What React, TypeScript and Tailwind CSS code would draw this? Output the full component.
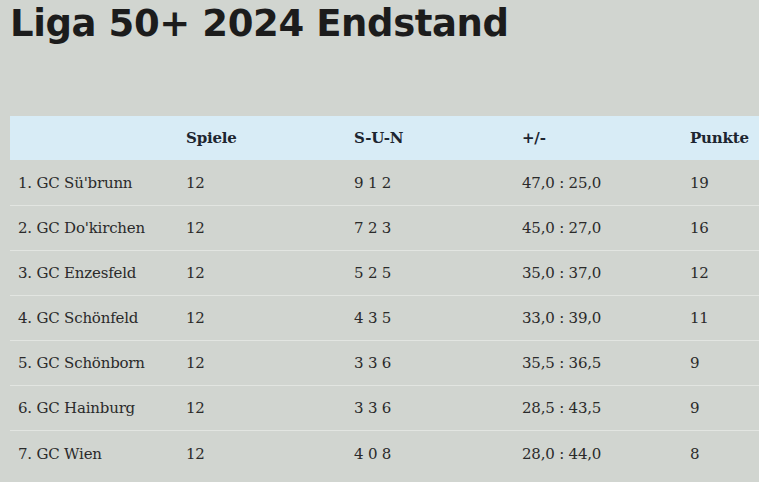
const rows = [
  ["1. GC Sü'brunn", "12", "9 1 2", "47,0 : 25,0", "19"],
  ["2. GC Do'kirchen", "12", "7 2 3", "45,0 : 27,0", "16"],
  ["3. GC Enzesfeld", "12", "5 2 5", "35,0 : 37,0", "12"],
  ["4. GC Schönfeld", "12", "4 3 5", "33,0 : 39,0", "11"],
  ["5. GC Schönborn", "12", "3 3 6", "35,5 : 36,5", "9"],
  ["6. GC Hainburg", "12", "3 3 6", "28,5 : 43,5", "9"],
  ["7. GC Wien", "12", "4 0 8", "28,0 : 44,0", "8"],
];

const headers = ["", "Spiele", "S-U-N", "+/-", "Punkte"];

export default function App() {
  return (
    <div className="min-h-[482px] w-[759px] overflow-hidden bg-[#d1d5d0] pl-[10px]">
      <h1 className="pt-[2px] font-['DejaVu_Sans',sans-serif] text-[37px] font-bold leading-[44px] tracking-[-0.4px] text-[#1c1c1c]">
        Liga 50+ 2024 Endstand
      </h1>
      <table className="mt-[70px] w-[840px] table-fixed border-collapse font-['DejaVu_Serif',serif] text-[15px] tracking-[-0.2px] text-[#2a2a2a]">
        <thead>
          <tr className="h-[44px] bg-[#d8ecf6] text-[#1d2530]">
            {headers.map((h, i) => (
              <th key={i} className="w-[168px] px-2 text-left font-bold">
                {h}
              </th>
            ))}
          </tr>
        </thead>
        <tbody>
          {rows.map((r, ri) => (
            <tr
              key={r[0]}
              className={`h-[45px] ${ri < rows.length - 1 ? "border-b border-[#e2e5e1]" : ""}`}
            >
              {r.map((c, i) => (
                <td key={i} className="px-2 pt-[2px]">
                  {c}
                </td>
              ))}
            </tr>
          ))}
        </tbody>
      </table>
    </div>
  );
}
